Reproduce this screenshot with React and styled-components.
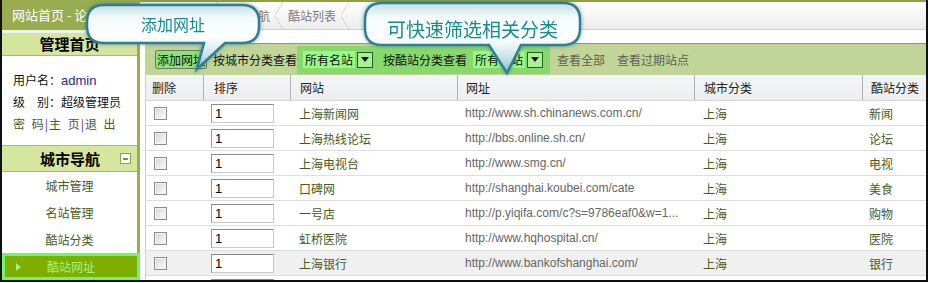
import React from "react";
import styled, { createGlobalStyle } from "styled-components";

const GlobalStyle = createGlobalStyle`
  html, body { margin: 0; padding: 0; background: #fff; }
  body {
    font-family: "Noto Sans CJK SC", "Liberation Sans", sans-serif;
    font-size: 12px;
  }
`;

const linhas = [
  ["上海新闻网", "http://www.sh.chinanews.com.cn/", "上海", "新闻"],
  ["上海热线论坛", "http://bbs.online.sh.cn/", "上海", "论坛"],
  ["上海电视台", "http://www.smg.cn/", "上海", "电视"],
  ["口碑网", "http://shanghai.koubei.com/cate", "上海", "美食"],
  ["一号店", "http://p.yiqifa.com/c?s=9786eaf0&w=1...", "上海", "购物"],
  ["虹桥医院", "http://www.hqhospital.cn/", "上海", "医院"],
  ["上海银行", "http://www.bankofshanghai.com/", "上海", "银行"],
  ["", "", "", ""],
];

const colunas = [
  { titulo: "删除", pad: 6 },
  { titulo: "排序", pad: 10 },
  { titulo: "网站", pad: 9 },
  { titulo: "网址", pad: 8 },
  { titulo: "城市分类", pad: 9 },
  { titulo: "酷站分类", pad: 8 },
];

function bubblePath(w, h, r, t1, t2, tx, ty) {
  return `M${r},0 H${w - r} Q${w},0 ${w},${r} V${h - r} Q${w},${h} ${w - r},${h} H${t2} L${tx},${ty} L${t1},${h} H${r} Q0,${h} 0,${h - r} V${r} Q0,0 ${r},0 Z`;
}

function Callout({ left, top, w, h, t1, t2, tx, ty, size, shift, children, id }) {
  return (
    <Bubble style={{ left, top, width: w, height: ty }}>
      <svg width={w} height={ty} viewBox={`0 0 ${w} ${ty}`} overflow="visible">
        <defs>
          <linearGradient id={id} x1="0" y1="0" x2="0" y2="1">
            <stop offset="0" stopColor="#c2dfe5" />
            <stop offset="0.2" stopColor="#f4fafb" />
            <stop offset="0.5" stopColor="#ffffff" />
            <stop offset="0.78" stopColor="#c8e3e9" />
            <stop offset="1" stopColor="#84b8c5" />
          </linearGradient>
        </defs>
        <path
          d={bubblePath(w, h, 17, t1, t2, tx, ty)}
          fill={`url(#${id})`}
          stroke="#337f90"
          strokeWidth="2.5"
        />
      </svg>
      <BubbleText $size={size} $h={h} $shift={shift}>{children}</BubbleText>
    </Bubble>
  );
}

export default function App() {
  return (
    <>
      <GlobalStyle />
      <Frame>
        <Sidebar>
          <SideTitle>网站首页 - 论坛</SideTitle>
          <Band>管理首页</Band>
          <UserInfo>
            <p>用户名：<Admin>admin</Admin></p>
            <p>级　别：超级管理员</p>
            <p>
              <Link>密 码</Link><Sep>|</Sep><Link>主 页</Link><Sep>|</Sep><Link>退 出</Link>
            </p>
          </UserInfo>
          <NavHead>
            <span>城市导航</span>
            <Toggle />
          </NavHead>
          <NavItem>城市管理</NavItem>
          <NavItem>名站管理</NavItem>
          <NavItem>酷站分类</NavItem>
          <NavItem $ativo>
            <Seta />
            酷站网址
          </NavItem>
        </Sidebar>

        <Main>
          <Crumbs>
            <span>网站首页</span>
            <Chevron />
            <span>城市导航</span>
            <Chevron />
            <span>酷站列表</span>
            <Chevron />
          </Crumbs>

          <Conteudo>
            <Toolbar>
              <BotaoAdd>添加网址</BotaoAdd>
              <Rotulo>按城市分类查看</Rotulo>
              <Destaque>
                <Select>
                  <SelectTexto>所有名站</SelectTexto>
                  <SelectBtn />
                </Select>
                <Rotulo $gap={10}>按酷站分类查看</Rotulo>
                <Select $gap={6}>
                  <SelectTexto>所有名站</SelectTexto>
                  <SelectBtn />
                </Select>
              </Destaque>
              <LinkCinza $gap={7}>查看全部</LinkCinza>
              <LinkCinza $gap={12}>查看过期站点</LinkCinza>
            </Toolbar>

            <Tabela>
              <Cabecalho>
                {colunas.map((c, i) => (
                  <HeadCell key={c.titulo} $pad={c.pad} $first={i === 0}>{c.titulo}</HeadCell>
                ))}
              </Cabecalho>
              {linhas.map((l, i) => (
                <Linha key={i} $hover={i === 6}>
                  <Cell $pad={8}><Check /></Cell>
                  <Cell $pad={8}><Ordem defaultValue="1" /></Cell>
                  <Cell $pad={9} $cor="#4a5a1e">{l[0]}</Cell>
                  <Cell $pad={8} $cor="#666" $latin>{l[1]}</Cell>
                  <Cell $pad={9} $cor="#4a5a1e">{l[2]}</Cell>
                  <Cell $pad={7} $cor="#4a5a1e">{l[3]}</Cell>
                </Linha>
              ))}
            </Tabela>
          </Conteudo>
        </Main>

        <Callout id="g1" left={85} top={5} w={172} h={38} t1={117} t2={138} tx={110} ty={64} size={16} shift={0}>
          添加网址
        </Callout>
        <Callout id="g2" left={363} top={3} w={215} h={42} t1={124} t2={156} tx={142} ty={70} size={19} shift={4}>
          可快速筛选相关分类
        </Callout>
      </Frame>
    </>
  );
}

const Frame = styled.div`
  position: relative;
  display: flex;
  width: 928px;
  height: 282px;
  box-sizing: border-box;
  border-left: 2px solid #111;
  border-right: 2px solid #111;
  border-bottom: 2px solid #111;
  overflow: hidden;
`;

const Sidebar = styled.div`
  width: 138px;
  flex-shrink: 0;
  box-sizing: border-box;
  border-right: 3px solid #9aae4c;
  display: flex;
  flex-direction: column;
`;

const SideTitle = styled.div`
  height: 30px;
  line-height: 30px;
  background: #9aac50;
  color: #fff;
  font-size: 13px;
  padding-left: 10px;
  white-space: nowrap;
  overflow: hidden;
`;

const Band = styled.div`
  height: 26px;
  box-sizing: border-box;
  border-top: 3px solid #eef1e4;
  border-bottom: 1px solid #a9bd5e;
  background: #d4e59d;
  text-align: center;
  font-size: 15px;
  font-weight: bold;
  line-height: 22px;
  color: #000;
`;

const UserInfo = styled.div`
  height: 89px;
  box-sizing: border-box;
  padding: 13px 0 0 11px;
  p {
    margin: 0;
    height: 22px;
    line-height: 22px;
    color: #111;
    white-space: nowrap;
  }
`;

const Admin = styled.span`
  font-family: "Liberation Sans", sans-serif;
  font-size: 13px;
  color: #2b2a7e;
`;

const Link = styled.span`
  color: #4a5a1e;
  letter-spacing: 1px;
  word-spacing: 2px;
`;

const Sep = styled.span`
  color: #6a1f7a;
  margin: 0 1px 0 0;
`;

const NavHead = styled.div`
  height: 27px;
  box-sizing: border-box;
  border-top: 1px solid #a9bd5e;
  border-bottom: 1px solid #a9bd5e;
  background: #d5e69f;
  display: flex;
  align-items: center;
  padding-left: 38px;
  font-size: 15px;
  font-weight: bold;
  color: #000;
`;

const Toggle = styled.span`
  width: 11px;
  height: 11px;
  box-sizing: border-box;
  margin-left: 20px;
  border: 1px solid #8fa24a;
  background: #fff;
  display: flex;
  align-items: center;
  justify-content: center;
  &::after {
    content: "";
    width: 5px;
    height: 2px;
    background: #7a9a2a;
  }
`;

const NavItem = styled.div`
  height: 27px;
  box-sizing: border-box;
  display: flex;
  align-items: center;
  justify-content: center;
  position: relative;
  color: ${(p) => (p.$ativo ? "#a6f27c" : "#4a5a1e")};
  background: ${(p) => (p.$ativo ? "#7eae02" : "transparent")};
  border: ${(p) => (p.$ativo ? "3px solid #6ff56a" : "none")};
  margin-right: ${(p) => (p.$ativo ? "-3px" : "0")};
  z-index: 1;
`;

const Seta = styled.span`
  position: absolute;
  left: 11px;
  top: 7px;
  width: 0;
  height: 0;
  border-top: 4px solid transparent;
  border-bottom: 4px solid transparent;
  border-left: 5px solid #a6f27c;
`;

const Main = styled.div`
  flex: 1;
  min-width: 0;
  display: flex;
  flex-direction: column;
`;

const Crumbs = styled.div`
  height: 30px;
  box-sizing: border-box;
  border-top: 2px solid #8fa23f;
  border-bottom: 1px solid #cfcfcf;
  background: linear-gradient(#ffffff, #ececec);
  display: flex;
  align-items: center;
  padding-left: 16px;
  color: #7a7a7a;
  white-space: nowrap;
`;

const Chevron = styled.span`
  width: 8px;
  height: 27px;
  margin: 0 5px;
  background:
    linear-gradient(to top right, transparent 46%, #c4c4c4 50%, transparent 54%) bottom / 100% 50% no-repeat,
    linear-gradient(to bottom right, transparent 46%, #c4c4c4 50%, transparent 54%) top / 100% 50% no-repeat;
`;

const Conteudo = styled.div`
  padding: 13px 0 0 5px;
`;

const Toolbar = styled.div`
  height: 32px;
  box-sizing: border-box;
  border-top: 1px solid #8da24a;
  background: #c1d598;
  display: flex;
  align-items: center;
  padding-left: 10px;
  white-space: nowrap;
`;

const BotaoAdd = styled.span`
  height: 19px;
  box-sizing: border-box;
  padding: 0 1px;
  border: 1px solid #6f7d5c;
  border-radius: 2px;
  background: #8ee27c;
  color: #111;
  line-height: 17px;
`;

const Rotulo = styled.span`
  margin-left: ${(p) => p.$gap ?? 6}px;
  color: #111;
`;

const Destaque = styled.div`
  height: 28px;
  display: flex;
  align-items: center;
  padding: 0 7px 0 6px;
  background: #89d86e;
`;

const Select = styled.span`
  display: flex;
  align-items: center;
  gap: 2px;
  margin-left: ${(p) => p.$gap ?? 0}px;
`;

const SelectTexto = styled.span`
  height: 17px;
  line-height: 17px;
  padding: 0 2px;
  background: #98fb84;
  color: #111;
`;

const SelectBtn = styled.span`
  width: 16px;
  height: 16px;
  box-sizing: border-box;
  border: 1px solid #21621f;
  background: #a9f195;
  display: flex;
  align-items: center;
  justify-content: center;
  &::after {
    content: "";
    border-left: 4px solid transparent;
    border-right: 4px solid transparent;
    border-top: 5px solid #111;
  }
`;

const LinkCinza = styled.span`
  margin-left: ${(p) => p.$gap}px;
  color: #5f5f55;
`;

const Tabela = styled.div`
  border-left: 1px solid #cfcfcf;
`;

const grade = "57px 87px 167px 237px 168px 64px";

const Cabecalho = styled.div`
  display: grid;
  grid-template-columns: ${grade};
  height: 26px;
  box-sizing: border-box;
  background: linear-gradient(#f4f5f6, #eceeef);
  border-bottom: 1px solid #d6d6d6;
`;

const HeadCell = styled.div`
  display: flex;
  align-items: center;
  padding-left: ${(p) => p.$pad}px;
  border-left: ${(p) => (p.$first ? "none" : "1px solid #b2b2b2")};
  color: #222;
  white-space: nowrap;
  overflow: hidden;
`;

const Linha = styled.div`
  display: grid;
  grid-template-columns: ${grade};
  height: 25px;
  box-sizing: border-box;
  border-bottom: 1px solid #dedede;
  background: ${(p) => (p.$hover ? "#f0f0f0" : "#fff")};
`;

const Cell = styled.div`
  display: flex;
  align-items: center;
  padding-left: ${(p) => p.$pad}px;
  color: ${(p) => p.$cor || "#222"};
  font-family: ${(p) => (p.$latin ? '"Liberation Sans", sans-serif' : "inherit")};
  white-space: nowrap;
  overflow: hidden;
`;

const Check = styled.span`
  width: 13px;
  height: 13px;
  box-sizing: border-box;
  border: 1px solid #8c8c8c;
  background: linear-gradient(135deg, #d6d6d6, #fbfbfb);
  box-shadow: inset 0 0 0 1px #f2f2f2;
`;

const Ordem = styled.input`
  width: 63px;
  height: 19px;
  box-sizing: border-box;
  margin: 0;
  padding: 0 3px;
  border: 1px solid #c8c8c8;
  border-top-color: #8a8a8a;
  border-left-color: #9a9a9a;
  font-family: "Liberation Sans", sans-serif;
  font-size: 13px;
  color: #000;
  background: #fff;
`;

const Bubble = styled.div`
  position: absolute;
  z-index: 5;
  filter: drop-shadow(0 0 2px rgba(40, 110, 130, 0.6));
  svg {
    position: absolute;
    left: 0;
    top: 0;
  }
`;

const BubbleText = styled.div`
  position: absolute;
  left: 0;
  top: ${(p) => p.$shift}px;
  width: 100%;
  height: ${(p) => p.$h}px;
  display: flex;
  align-items: center;
  justify-content: center;
  font-size: ${(p) => p.$size}px;
  color: #178b8f;
  white-space: nowrap;
`;
